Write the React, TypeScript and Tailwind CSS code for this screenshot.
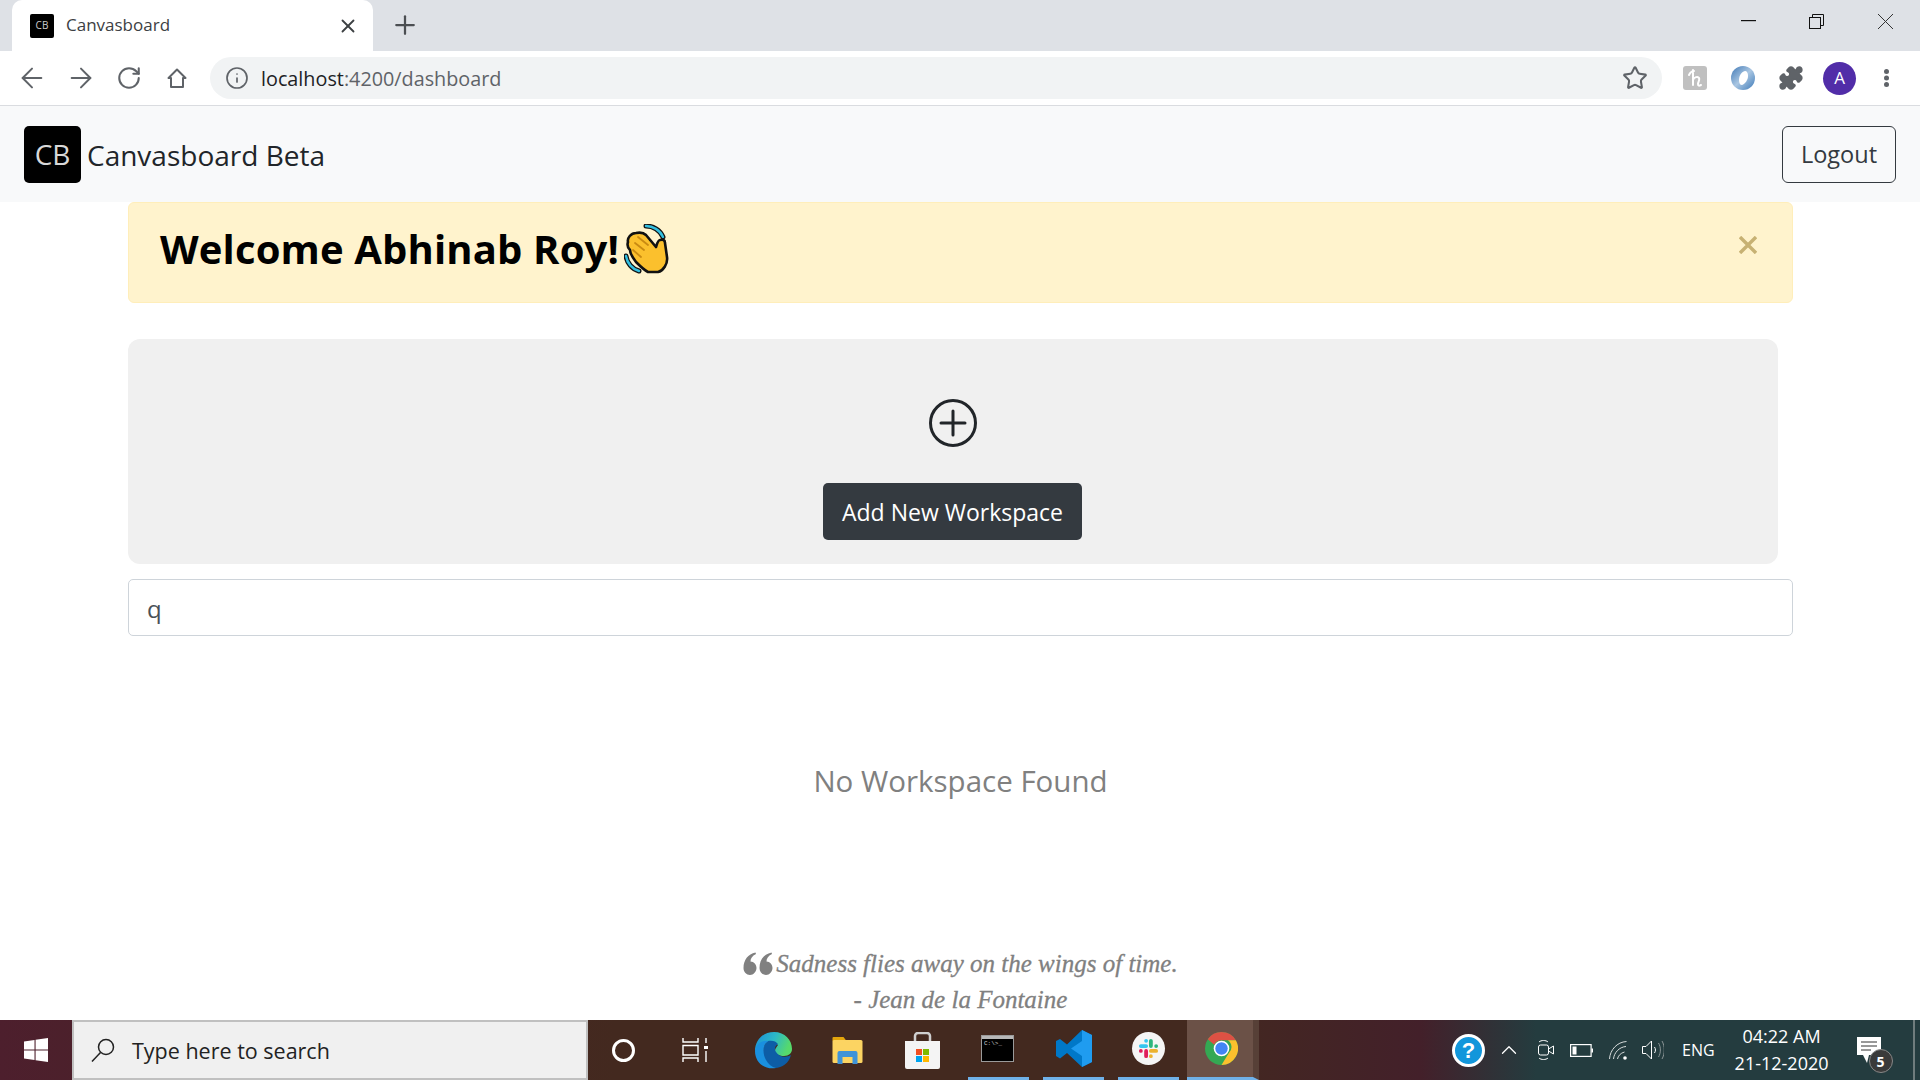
import { ArrowLeft, ArrowRight, RotateCw, Info, Star, X, Plus, Puzzle, ChevronUp } from "lucide-react";

function WindowsLogo() {
  return (
    <svg width="24" height="24" viewBox="0 0 24 24" fill="#fff">
      <path d="M0 3.4 10.500 2v9.400H0zM11.600 1.800 24 0v11.400H11.600zM0 12.600h10.500V22L0 20.600zM11.600 12.600H24V24l-12.400-1.800z" />
    </svg>
  );
}

function SearchGlyph() {
  return (
    <svg width="24" height="24" viewBox="0 0 24 24" fill="none" stroke="#222" strokeWidth="1.500">
      <circle cx="15" cy="9" r="7.500" />
      <path d="M9.500 14.500 1 23.500" />
    </svg>
  );
}

function TaskViewGlyph() {
  return (
    <svg width="26" height="24" viewBox="0 0 26 24" fill="none" stroke="#fff" strokeWidth="1.400">
      <path d="M1 0v4h15V0M1 7.500h15v9.500H1zM1 24v-4h15v4M24 0v5M24 13v11" />
      <rect x="22" y="8" width="4" height="3" fill="#fff" stroke="none" />
    </svg>
  );
}

function EdgeLogo() {
  return (
    <svg width="37" height="37" viewBox="0 0 37 37">
      <defs>
        <linearGradient id="edgeTop" x1="0" y1="0" x2="1" y2="0.300">
          <stop offset="0" stopColor="#1a8ed8" />
          <stop offset="0.550" stopColor="#2cb8c8" />
          <stop offset="1" stopColor="#56d96c" />
        </linearGradient>
      </defs>
      <path d="M0 19C0 8 8 0 19 0c11 0 18 8 18 17 0 4-3 7-8 7-4 0-9-2-9-5 0-3 2-4 3-6-3-3-8-4-12-2-6 2-10 8-11 8z" fill="url(#edgeTop)" />
      <path d="M13 9c4-1 8 0 10 3-3 2-4 5-2 8 3 5 10 6 15 3-2 8-9 13-16 13-5-1-9-4-11-9-2-6-1-15 4-18z" fill="#0d5da6" />
      <path d="M0 19C1 12 7 8 13 9c-5 3-6 12-2 19 2 4 6 7 10 8C10 38 0 31 0 19z" fill="#1a90df" />
    </svg>
  );
}

function FolderLogo() {
  return (
    <svg width="31" height="28" viewBox="0 0 30 28">
      <path d="M0 2a1 1 0 0 1 1-1h10l3 4H0z" fill="#e3a50c" />
      <rect x="0" y="4" width="30" height="23" rx="1.500" fill="#fcd462" />
      <path d="M5 28V17a2 2 0 0 1 2-2h16a2 2 0 0 1 2 2v11h-5v-7H10v7z" fill="#3f93d8" />
    </svg>
  );
}

function StoreLogo() {
  return (
    <svg width="35" height="37" viewBox="0 0 35 37">
      <path d="M10 10V4a3 3 0 0 1 3-3h9a3 3 0 0 1 3 3v6" fill="none" stroke="#cfcfcf" strokeWidth="2.500" />
      <path d="M0 9h35v26a2 2 0 0 1-2 2H2a2 2 0 0 1-2-2z" fill="#f4f4f4" />
      <rect x="11" y="17" width="6" height="6" fill="#f25022" />
      <rect x="18" y="17" width="6" height="6" fill="#7fba00" />
      <rect x="11" y="24" width="6" height="6" fill="#00a4ef" />
      <rect x="18" y="24" width="6" height="6" fill="#ffb900" />
    </svg>
  );
}

function TerminalLogo() {
  return (
    <div className="mr-[2px] flex h-[27px] w-[33px] flex-col border border-[#9a9a9a] bg-black">
      <div className="h-[3px] bg-[#b8b8b8]" />
      <span className="pl-[2px] font-['Liberation_Mono',monospace] text-[6px] leading-[9px] text-[#cfcfcf]">C:\&gt;_</span>
    </div>
  );
}

function VsCodeLogo() {
  return (
    <svg width="36" height="37" viewBox="0 0 36 37">
      <path d="M26 0 36 5v27l-10 5-15-14-7 5.500L0 26V11l4-2 7 5.500z" fill="#0078c8" />
      <path d="M26 0 36 5v27l-10 5V26L15 18.500 26 11z" fill="#1f9cf0" />
    </svg>
  );
}

function SlackLogo() {
  return (
    <div className="flex size-[33px] items-center justify-center rounded-full bg-[#f5f5f5]">
      <svg width="21" height="21" viewBox="0 0 22 22" fill="none" strokeWidth="4" strokeLinecap="round">
        <path d="M3 8.500h5.500M8.500 3v0" stroke="#36c5f0" />
        <path d="M13.500 3v5.500M19 8.500h0" stroke="#2eb67d" />
        <path d="M13.500 13.500H19M13.500 19h0" stroke="#ecb22e" />
        <path d="M8.500 13.500V19M3 13.500h0" stroke="#e01e5a" />
      </svg>
    </div>
  );
}

function ChromeLogo() {
  return (
    <svg width="33" height="33" viewBox="0 0 36 36" className="ml-[3px]">
      <circle cx="18" cy="18" r="18" fill="#34a853" />
      <path d="M18 0a18 18 0 0 1 15.600 9H18a9 9 0 0 0-8 5L3 8a18 18 0 0 1 15-8z" fill="#dd5144" />
      <path d="M33.600 9A18 18 0 0 1 18 36l8-13a9 9 0 0 0-1-14z" fill="#fbc02d" />
      <circle cx="18" cy="18" r="8.500" fill="#fff" />
      <circle cx="18" cy="18" r="6.800" fill="#4285f4" />
    </svg>
  );
}

function HelpBadge() {
  return (
    <div className="flex size-[33px] items-center justify-center rounded-full border-[3px] border-white bg-[#1296db] font-['Liberation_Sans',sans-serif] text-[22px] font-bold text-white">
      ?
    </div>
  );
}

function MeetGlyph() {
  return (
    <svg width="16" height="22" viewBox="0 0 16 22" fill="none" stroke="#fff" strokeWidth="1">
      <rect x="0.500" y="6" width="10" height="10" rx="2" />
      <path d="M10.500 10 15.500 7v8l-5-3M1 3c2-2 7-2 9 0M1 19c2 2 7 2 9 0" />
    </svg>
  );
}

function BatteryGlyph() {
  return (
    <svg width="23" height="13" viewBox="0 0 23 13" fill="none" stroke="#fff" strokeWidth="1.200">
      <rect x="0.600" y="0.600" width="20.500" height="11.800" />
      <rect x="2.500" y="2.500" width="4" height="8" fill="#fff" stroke="none" />
      <rect x="21.500" y="4.500" width="1.500" height="4" fill="#fff" stroke="none" />
    </svg>
  );
}

function WifiGlyph() {
  return (
    <svg width="18" height="19" viewBox="0 0 18 19" fill="none" stroke="#d8dcdc" strokeWidth="1">
      <path d="M0.500 18C1 9 8 1 17.500 0.500M4.500 18C5 12 10 6 17 5.500M8.500 18c.5-3 3-6 7-7" />
      <circle cx="16" cy="17" r="1.800" fill="#fff" stroke="none" />
    </svg>
  );
}

function VolumeGlyph() {
  return (
    <svg width="22" height="20" viewBox="0 0 22 20" fill="none" stroke="#fff" strokeWidth="1">
      <path d="M0.500 6.500h3.500L9.500 1v18L4 13.500H0.500z" />
      <path d="M12.500 7c1.300 2 1.300 4 0 6" />
      <path d="M16.500 3c2.500 4 2.500 10 0 14M20 1c3 5 3 13 0 18" stroke="#8b9596" />
    </svg>
  );
}

function ClapEmoji() {
  return (
    <svg width="48" height="50" viewBox="0 0 48 50" className="ml-[5px]">
      <path d="M22 2c7 0 14 4 17 11" fill="none" stroke="#111" strokeWidth="5" strokeLinecap="round" />
      <path d="M22 2c7 0 14 4 17 11" fill="none" stroke="#33bfe0" strokeWidth="2.400" strokeLinecap="round" />
      <path d="M2 32c1 7 6 13 13 15" fill="none" stroke="#111" strokeWidth="5" strokeLinecap="round" />
      <path d="M2 32c1 7 6 13 13 15" fill="none" stroke="#33bfe0" strokeWidth="2.400" strokeLinecap="round" />
      <path d="M4 18c-1-4 3-9 8-9 5-1 8 0 10 2l10 12c1-3 2-7 4-7 3-1 5 0 5 3l2 14c1 7-4 14-9 15H24c-4-2-8-6-12-10-3-4-6-8-6-12-2-2-3-5-2-8z" fill="#fbc02d" stroke="#111" strokeWidth="2.600" strokeLinejoin="round" />
      <path d="M11 19l9 7M14 13l10 8M9 26l8 7" fill="none" stroke="#c98a12" strokeWidth="1.800" strokeLinecap="round" />
    </svg>
  );
}

export default function App() {
  return (
    <div className="flex h-[1080px] w-[1920px] flex-col overflow-hidden bg-white font-['Open_Sans',sans-serif]">
      {/* tab strip */}
      <div className="flex h-[51px] shrink-0 items-start bg-[#dee1e6] pl-[12px]">
        <div className="flex h-[51px] w-[361px] items-center rounded-t-[10px] bg-white pl-[18px] pr-[14px]">
          <div className="flex size-[24px] items-center justify-center rounded-[2px] bg-black text-[10px] text-[#ccc]">CB</div>
          <span className="mb-[1px] ml-[12px] flex-1 text-[17px] text-[#3c4043]">Canvasboard</span>
          <X size={22} strokeWidth={2} className="text-[#3c4043]" />
        </div>
        <Plus size={30} strokeWidth={1.800} className="ml-[17px] mt-[10px] text-[#4b4e52]" />
        <div className="ml-auto flex h-[42px] items-center">
          <svg width="15" height="2" className="mr-[53px]"><rect width="15" height="1.200" fill="#111" /></svg>
          <svg width="15" height="15" viewBox="0 0 15 15" fill="none" stroke="#111" strokeWidth="1" className="mr-[54px]">
            <rect x="0.500" y="3.500" width="11" height="11" />
            <path d="M3.500 3.500V.5h11v11h-3" />
          </svg>
          <svg width="15" height="15" viewBox="0 0 15 15" stroke="#333" strokeWidth="1" className="mr-[27px]"><path d="M0 0 15 15M15 0 0 15" /></svg>
        </div>
      </div>

      {/* toolbar */}
      <div className="flex h-[55px] shrink-0 items-center border-b border-[#dadce0] bg-white pl-[16px] text-[#5f6368]">
        <ArrowLeft size={32} strokeWidth={1.500} />
        <ArrowRight size={32} strokeWidth={1.500} className="ml-[17px]" />
        <RotateCw size={26} strokeWidth={1.900} className="ml-[19px]" />
        <svg width="22" height="22" viewBox="0 0 22 22" fill="none" stroke="#5f6368" strokeWidth="2" className="ml-[24px]">
          <path d="M11 2.500 2.500 11H5v9h12v-9h2.500z" strokeLinejoin="round" />
        </svg>
        <div className="ml-[22px] flex h-[42px] w-[1452px] shrink-0 items-center rounded-full bg-[#f1f3f4] pl-[15px] pr-[14px]">
          <Info size={24} strokeWidth={1.700} />
          <span className="ml-[12px] flex-1 pt-[1px] text-[19.800px] text-[#5f6368]">
            <span className="text-[#202124]">localhost</span>:4200/dashboard
          </span>
          <Star size={26} strokeWidth={1.900} />
        </div>
        <div className="ml-[21px] flex size-[24px] items-center justify-center rounded-[3px] bg-[#c0c0c0]">
          <svg width="14" height="18" viewBox="0 0 14 18" fill="none" stroke="#fff" strokeWidth="2" strokeLinecap="round">
            <path d="M1 6c1-2 3-4 5-4M5 1v15M5 11c1-3 5-4 6-2s-1 4-1 6 1 2 3 1" />
          </svg>
        </div>
        <svg width="24" height="24" viewBox="0 0 24 24" className="ml-[24px]">
          <defs>
            <linearGradient id="ringBlue" x1="0" y1="0" x2="1" y2="1">
              <stop offset="0" stopColor="#3f78b5" />
              <stop offset="0.500" stopColor="#a9c6e2" />
              <stop offset="1" stopColor="#3e7ab8" />
            </linearGradient>
          </defs>
          <circle cx="12" cy="12" r="12" fill="url(#ringBlue)" />
          <path d="M14 5c-4 1-6 5-6 9 0 3 1 5 3 5 3-1 6-5 6-9 0-3-1-5-3-5z" fill="#fff" />
        </svg>
        <Puzzle size={26} fill="#5f6368" strokeWidth={1.500} className="ml-[23px]" />
        <div className="ml-[19px] flex size-[33px] items-center justify-center rounded-full bg-[#512da8] text-[17px] text-white">A</div>
        <svg width="5" height="18" viewBox="0 0 5 18" fill="#5f6368" className="ml-[28px]">
          <circle cx="2.500" cy="2.500" r="2.500" />
          <circle cx="2.500" cy="9" r="2.500" />
          <circle cx="2.500" cy="15.500" r="2.500" />
        </svg>
      </div>

      {/* navbar */}
      <nav className="flex h-[96px] shrink-0 items-center justify-between bg-[#f8f9fa] pl-[24px] pr-[24px]">
        <div className="flex items-center gap-[6px]">
          <div className="flex h-[57px] w-[57px] items-center justify-center rounded-[5px] bg-black text-[28px] text-[#d8d8d8]">CB</div>
          <span className="pt-[1px] text-[28px] text-[#212529]">Canvasboard Beta</span>
        </div>
        <button className="h-[57px] w-[114px] rounded-[6px] border border-[#343a40] pt-[2px] text-[23.500px] text-[#343a40]">Logout</button>
      </nav>

      {/* page content */}
      <main className="flex flex-1 flex-col pl-[128px] pr-[127px]">
        <div className="flex h-[101px] shrink-0 items-start justify-between rounded-[6px] border border-[#ffeeba] bg-[#fff3cd] pl-[31px] pr-[35px]">
          <div className="mt-[18px] flex items-center">
            <span className="text-[40px] font-bold leading-[56px] tracking-[0.150px] text-black">Welcome Abhinab Roy!</span>
            <ClapEmoji />
          </div>
          <svg width="18" height="18" viewBox="0 0 18 18" stroke="#c7b173" strokeWidth="3.400" className="mt-[33px]"><path d="M1 1 17 17M17 1 1 17" /></svg>
        </div>

        <div className="mt-[36px] flex h-[225px] w-[1650px] shrink-0 flex-col items-center rounded-[12px] bg-[#f0f0f0]">
          <svg width="48" height="48" viewBox="0 0 48 48" fill="none" stroke="#212529" strokeWidth="3" className="mt-[60px]">
            <circle cx="24" cy="24" r="22.500" />
            <path d="M24 12v24M12 24h24" strokeLinecap="round" />
          </svg>
          <button className="mr-[1px] mt-[36px] h-[57px] w-[259px] rounded-[5px] bg-[#343a40] pt-[2px] text-[23px] text-white">Add New Workspace</button>
        </div>

        <div className="mt-[15px] flex h-[57px] shrink-0 items-center rounded-[5px] border border-[#ced4da] pl-[18px] pt-[2px] text-[24px] text-[#495057]">q</div>

        <p className="mt-[123px] text-center text-[29.500px] font-medium leading-[43px] text-[#808080]">No Workspace Found</p>

        <div className="mt-[144px] flex flex-col items-center font-['Liberation_Serif',serif] text-[25px] italic leading-[36px] text-[#808080] [-webkit-text-stroke:0.300px_#808080]">
          <p className="flex items-center">
            <svg width="30" height="24" viewBox="0 0 30 24" fill="#808080" className="mr-[3px]">
              <path d="M0.500 16C0.500 8 5 2 12.500 0.500l.5 1.500C9 4 7.500 6.500 7.500 9.500c3.500 0 6 3 6 6.500s-3 7-6.500 7S0.500 20 0.500 16z" />
              <path d="M16.500 16c0-8 4.500-14 12-15.500l.5 1.500c-4 2-5.500 4.500-5.500 7.500 3.500 0 6 3 6 6.500s-3 7-6.500 7-6.500-3-6.500-7z" />
            </svg>
            Sadness flies away on the wings of time.
          </p>
          <p>- Jean de la Fontaine</p>
        </div>
      </main>

      {/* windows taskbar */}
      <footer className="flex h-[60px] shrink-0 items-center bg-[linear-gradient(90deg,#4d1f2d_0%,#43291f_32%,#43291f_62%,#43202a_74%,#243c3f_80%,#243c3f_100%)] text-white">
        <div className="flex w-[72px] justify-center"><WindowsLogo /></div>
        <div className="flex h-[60px] w-[516px] items-center border-[2px] border-[#c0c0c0] bg-[#f0f0f0] pl-[17px] text-[#222]">
          <SearchGlyph />
          <span className="ml-[17px] pt-[2px] text-[21.500px]">Type here to search</span>
        </div>
        <div className="ml-[24px] size-[23px] rounded-full border-[3px] border-white" />
        <div className="ml-[47px]"><TaskViewGlyph /></div>
        <div className="ml-[47px]"><EdgeLogo /></div>
        <div className="ml-[40px]"><FolderLogo /></div>
        <div className="ml-[42px]"><StoreLogo /></div>
        <div className="ml-[28px] flex h-[60px] w-[61px] items-center justify-center border-b-[3px] border-[#6fb1e8]"><TerminalLogo /></div>
        <div className="ml-[14px] flex h-[60px] w-[61px] items-center justify-center border-b-[3px] border-[#6fb1e8]"><VsCodeLogo /></div>
        <div className="ml-[14px] flex h-[60px] w-[61px] items-center justify-center border-b-[3px] border-[#6fb1e8]"><SlackLogo /></div>
        <div className="ml-[8px] flex h-[60px] w-[72px] items-center justify-center border-b-[3px] border-r-[6px] border-b-[#6fb1e8] border-r-[#574037] bg-[#6b5147]"><ChromeLogo /></div>
        <div className="ml-[193px]"><HelpBadge /></div>
        <ChevronUp size={26} strokeWidth={1.200} className="ml-[11px]" />
        <div className="ml-[16px]"><MeetGlyph /></div>
        <div className="ml-[16px]"><BatteryGlyph /></div>
        <div className="ml-[16px]"><WifiGlyph /></div>
        <div className="ml-[15px]"><VolumeGlyph /></div>
        <span className="ml-[18px] text-[16px]">ENG</span>
        <div className="ml-[20px] flex w-[94px] flex-col items-center text-[18px] leading-[27px]">
          <span>04:22 AM</span>
          <span>21-12-2020</span>
        </div>
        <div className="relative ml-[28px]">
          <svg width="24" height="26" viewBox="0 0 24 26"><path d="M0 0h24v18H12l-2 8-4-8H0z" fill="#fff" /><path d="M4 5h16M4 9h16M4 13h10" stroke="#333" strokeWidth="1" /></svg>
          <div className="absolute left-[12px] top-[12px] flex size-[24px] items-center justify-center rounded-full border border-[#888] bg-[#3a3a3a] text-[14px] font-bold">5</div>
        </div>
        <div className="ml-auto mr-[5px] h-[60px] w-[2px] bg-[#6f7c7d]" />
      </footer>
    </div>
  );
}
